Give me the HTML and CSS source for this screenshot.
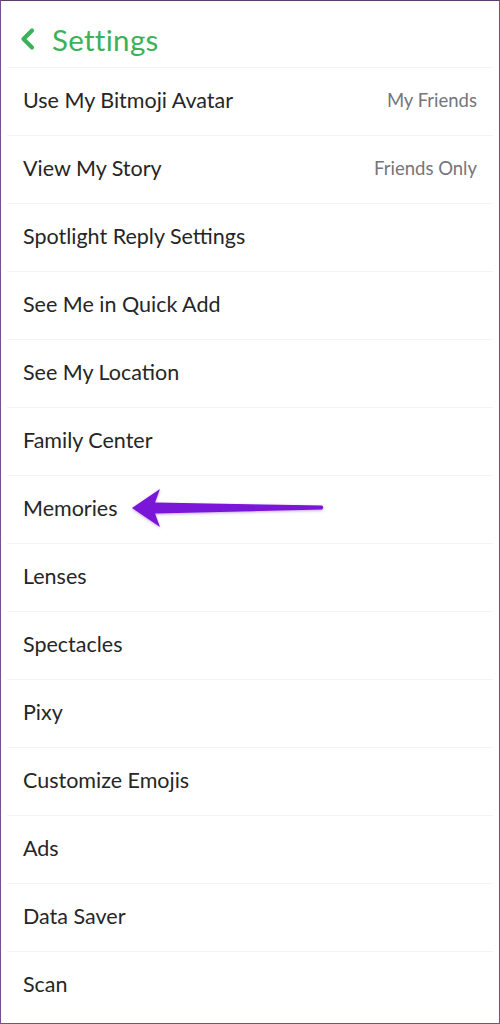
FILE: index.html
```html
<!DOCTYPE html>
<html lang="en">

    <head>
        <meta charset="UTF-8">
        <meta name="viewport" content="width=device-width, initial-scale=1.0">
        <title>Settings</title>

        <link rel="stylesheet" href="styles.css">
    </head>

    <body>

        <div class="frame">
            <header class="topbar">
                <svg class="back" width="18" height="24" viewBox="0 0 18 24">
                    <path d="M13 3.5 L4.5 12 L13 20.5" fill="none" stroke="#3bb25a" stroke-width="4.2" stroke-linecap="round" stroke-linejoin="round"/>
                </svg>
                <h1>Settings</h1>
            </header>

            <ul class="list">
                <li><span>Use My Bitmoji Avatar</span><span class="value">My Friends</span></li>
                <li><span>View My Story</span><span class="value">Friends Only</span></li>
                <li><span>Spotlight Reply Settings</span></li>
                <li><span>See Me in Quick Add</span></li>
                <li><span>See My Location</span></li>
                <li><span>Family Center</span></li>
                <li class="marked">
                    <span>Memories</span>
                    <svg class="pointer" width="200" height="44" viewBox="0 0 200 44">
                        <defs>
                            <filter id="glow" x="-10%" y="-30%" width="120%" height="160%">
                                <feDropShadow dx="0" dy="1" stdDeviation="1.5" flood-color="#5a0a9a" flood-opacity="0.35"/>
                            </filter>
                        </defs>
                        <path d="M3 22 L31 3 L26 16.5 L193 19.5 Q195.5 21.5 193 23.5 L26 27.5 L31 41 Z" fill="#7a12d8" filter="url(#glow)"/>
                    </svg>
                </li>
                <li><span>Lenses</span></li>
                <li><span>Spectacles</span></li>
                <li><span>Pixy</span></li>
                <li><span>Customize Emojis</span></li>
                <li><span>Ads</span></li>
                <li><span>Data Saver</span></li>
                <li><span>Scan</span></li>
            </ul>
        </div>

    </body>

</html>
```

FILE: styles.css
```css
body {
    margin: 0;
    padding: 0;
    background-color: #fff;
    font-family: Lato, "Open Sans", Arial, sans-serif;
}

.frame {
    width: 500px;
    height: 1024px;
    box-sizing: border-box;
    border: 1px solid #7b4f8e;
    border-top-color: #5c3d6e;
    overflow: hidden;
}

.topbar {
    height: 66px;
    box-sizing: border-box;
    display: flex;
    align-items: center;
    padding: 10px 0 0 18px;
    gap: 15px;
}

h1 {
    margin: 0;
    font-size: 29.5px;
    font-weight: 400;
    color: #3bb25a;
    letter-spacing: 0.3px;
}

.list {
    list-style: none;
    margin: 0;
    padding: 0;
}

.list li {
    position: relative;
    height: 67px;
    box-sizing: content-box;
    margin: 0 6px;
    padding: 0 16px;
    border-top: 1px solid #f4f4f4;
    display: flex;
    align-items: center;
    justify-content: space-between;
    font-size: 21.5px;
    color: #262626;
}

.list li span {
    margin-bottom: 3px;
}

.value {
    font-size: 18.5px;
    color: #75757d;
}

.pointer {
    position: absolute;
    left: 122px;
    top: 10px;
}
```
